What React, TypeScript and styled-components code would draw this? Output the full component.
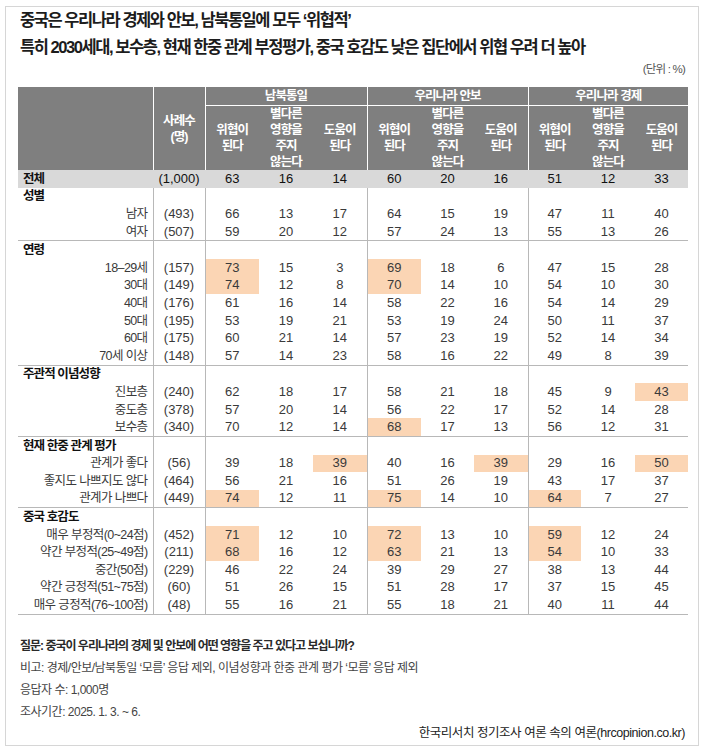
import React from "react";
import styled, { createGlobalStyle, css } from "styled-components";

const GlobalStyle = createGlobalStyle`
  html, body { margin: 0; padding: 0; background: #fff; }
  body {
    font-family: "Liberation Sans", "Noto Sans CJK KR", sans-serif;
    color: #333;
  }
`;

const LINE = "#b8b8b8";
const HEAD_BG = "#7f7f7f";
const TOTAL_BG = "#d9d9d9";
const HL = "#fbd5b4";

const Frame = styled.div`
  box-sizing: border-box;
  margin: 6px 0 0 5px;
  width: 694px;
  height: 740px;
  border: 1px solid #d6d6d6;
  display: flex;
  flex-direction: column;
`;

const TitleBlock = styled.header`
  padding: 0 13px 0 14px;
`;

const Title = styled.h1`
  margin: 0;
  font-size: 16.5px;
  font-weight: 700;
  line-height: 27px;
  letter-spacing: -1.45px;
  color: #1c1c1c;
`;

const Unit = styled.div`
  text-align: right;
  font-size: 11.5px;
  line-height: 14px;
  letter-spacing: -0.8px;
  color: #555;
  margin-top: 1px;
`;

const Table = styled.table`
  margin: 11px 0 0 12px;
  width: 670px;
  border-collapse: collapse;
  table-layout: fixed;
`;

const Th = styled.th<{ $right?: boolean; $bottom?: boolean; $h?: number }>`
  background: ${HEAD_BG};
  color: #fff;
  font-weight: 700;
  font-size: 12.5px;
  line-height: 16px;
  letter-spacing: -0.9px;
  padding: 0;
  text-align: center;
  vertical-align: middle;
  height: ${(p) => p.$h ?? 16}px;
  border-right: ${(p) => (p.$right ? "1px solid #fff" : "0")};
  border-bottom: ${(p) => (p.$bottom ? "1px solid #fff" : "0")};
`;

const Tr = styled.tr<{ $total?: boolean; $end?: boolean }>`
  height: 17.6px;
  background: ${(p) => (p.$total ? TOTAL_BG : "transparent")};
  ${(p) =>
    p.$end &&
    css`
      border-bottom: 1px solid ${LINE};
    `}
`;

const LabelCell = styled.td<{ $group?: boolean; $total?: boolean }>`
  padding: 0 5px;
  height: 17.6px;
  font-size: 12.5px;
  line-height: 16px;
  letter-spacing: ${(p) => (p.$group || p.$total ? "-0.9px" : "-0.6px")};
  white-space: nowrap;
  text-align: ${(p) => (p.$group || p.$total ? "left" : "right")};
  font-weight: ${(p) => (p.$group || p.$total ? 700 : 400)};
  color: ${(p) => (p.$group || p.$total ? "#111" : "#3a3a3a")};
  border-right: 1px solid ${(p) => (p.$total ? TOTAL_BG : LINE)};
`;

const CountCell = styled.td<{ $total?: boolean }>`
  padding: 0;
  font-size: 13px;
  line-height: 16px;
  text-align: center;
  color: ${(p) => (p.$total ? "#111" : "#3a3a3a")};
  border-right: 1px solid ${(p) => (p.$total ? TOTAL_BG : LINE)};
`;

const ValueCell = styled.td<{ $hl?: boolean; $sep?: boolean; $total?: boolean }>`
  padding: 0;
  font-size: 13px;
  line-height: 16px;
  text-align: center;
  color: ${(p) => (p.$total ? "#111" : "#3a3a3a")};
  background: ${(p) => (p.$hl ? HL : "transparent")};
  border-right: ${(p) =>
    p.$sep ? `1px solid ${p.$total ? TOTAL_BG : LINE}` : "0"};
`;

const Notes = styled.footer`
  margin-top: 20px;
  padding: 0 13px 0 14px;
  display: flex;
  flex-direction: column;
`;

const Note = styled.p<{ $strong?: boolean }>`
  margin: 0;
  font-size: 12px;
  line-height: 22px;
  letter-spacing: ${(p) => (p.$strong ? "-1px" : "-0.5px")};
  color: ${(p) => (p.$strong ? "#2a2a2a" : "#444")};
  font-weight: ${(p) => (p.$strong ? 700 : 400)};
`;

const Source = styled.p`
  margin: 0;
  text-align: right;
  font-size: 12.5px;
  line-height: 21px;
  letter-spacing: -0.45px;
  color: #222;
`;

type Row = { label: string; n: string; v: number[]; hl?: number[] };
type Section = { title: string; rows: Row[] };

const total: Row = { label: "전체", n: "(1,000)", v: [63, 16, 14, 60, 20, 16, 51, 12, 33] };

const sections: Section[] = [
  {
    title: "성별",
    rows: [
      { label: "남자", n: "(493)", v: [66, 13, 17, 64, 15, 19, 47, 11, 40] },
      { label: "여자", n: "(507)", v: [59, 20, 12, 57, 24, 13, 55, 13, 26] },
    ],
  },
  {
    title: "연령",
    rows: [
      { label: "18–29세", n: "(157)", v: [73, 15, 3, 69, 18, 6, 47, 15, 28], hl: [0, 3] },
      { label: "30대", n: "(149)", v: [74, 12, 8, 70, 14, 10, 54, 10, 30], hl: [0, 3] },
      { label: "40대", n: "(176)", v: [61, 16, 14, 58, 22, 16, 54, 14, 29] },
      { label: "50대", n: "(195)", v: [53, 19, 21, 53, 19, 24, 50, 11, 37] },
      { label: "60대", n: "(175)", v: [60, 21, 14, 57, 23, 19, 52, 14, 34] },
      { label: "70세 이상", n: "(148)", v: [57, 14, 23, 58, 16, 22, 49, 8, 39] },
    ],
  },
  {
    title: "주관적 이념성향",
    rows: [
      { label: "진보층", n: "(240)", v: [62, 18, 17, 58, 21, 18, 45, 9, 43], hl: [8] },
      { label: "중도층", n: "(378)", v: [57, 20, 14, 56, 22, 17, 52, 14, 28] },
      { label: "보수층", n: "(340)", v: [70, 12, 14, 68, 17, 13, 56, 12, 31], hl: [3] },
    ],
  },
  {
    title: "현재 한중 관계 평가",
    rows: [
      { label: "관계가 좋다", n: "(56)", v: [39, 18, 39, 40, 16, 39, 29, 16, 50], hl: [2, 5, 8] },
      { label: "좋지도 나쁘지도 않다", n: "(464)", v: [56, 21, 16, 51, 26, 19, 43, 17, 37] },
      { label: "관계가 나쁘다", n: "(449)", v: [74, 12, 11, 75, 14, 10, 64, 7, 27], hl: [0, 3, 6] },
    ],
  },
  {
    title: "중국 호감도",
    rows: [
      { label: "매우 부정적(0~24점)", n: "(452)", v: [71, 12, 10, 72, 13, 10, 59, 12, 24], hl: [0, 3, 6] },
      { label: "약간 부정적(25~49점)", n: "(211)", v: [68, 16, 12, 63, 21, 13, 54, 10, 33], hl: [0, 3, 6] },
      { label: "중간(50점)", n: "(229)", v: [46, 22, 24, 39, 29, 27, 38, 13, 44] },
      { label: "약간 긍정적(51~75점)", n: "(60)", v: [51, 26, 15, 51, 28, 17, 37, 15, 45] },
      { label: "매우 긍정적(76~100점)", n: "(48)", v: [55, 16, 21, 55, 18, 21, 40, 11, 44] },
    ],
  },
];

const groups = ["남북통일", "우리나라 안보", "우리나라 경제"];
const colWidths = [135, 52, 54, 54, 54, 54, 53, 54, 53, 54, 53];

const SubHead = ({ last }: { last: boolean }) => (
  <>
    <Th>
      위협이
      <br />
      된다
    </Th>
    <Th>
      별다른
      <br />
      영향을
      <br />
      주지
      <br />
      않는다
    </Th>
    <Th $right={!last}>
      도움이
      <br />
      된다
    </Th>
  </>
);

const Values = ({ row, isTotal }: { row: Row; isTotal?: boolean }) => (
  <>
    {row.v.map((val, i) => (
      <ValueCell
        key={i}
        $total={isTotal}
        $hl={row.hl?.includes(i)}
        $sep={i === 2 || i === 5}
      >
        {val}
      </ValueCell>
    ))}
  </>
);

export default function App() {
  return (
    <>
      <GlobalStyle />
      <Frame>
        <TitleBlock>
          <Title>
            중국은 우리나라 경제와 안보, 남북통일에 모두 ‘위협적’
            <br />
            특히 2030세대, 보수층, 현재 한중 관계 부정평가, 중국 호감도 낮은 집단에서 위협 우려 더 높아
          </Title>
          <Unit>(단위 : %)</Unit>
        </TitleBlock>

        <Table>
          <colgroup>
            {colWidths.map((w, i) => (
              <col key={i} style={{ width: w }} />
            ))}
          </colgroup>
          <thead>
            <tr>
              <Th rowSpan={2} $right />
              <Th rowSpan={2} $right>
                사례수
                <br />
                (명)
              </Th>
              {groups.map((g, i) => (
                <Th key={g} colSpan={3} $h={18} $bottom $right={i < 2}>
                  {g}
                </Th>
              ))}
            </tr>
            <tr>
              {groups.map((g, i) => (
                <SubHead key={g} last={i === 2} />
              ))}
            </tr>
          </thead>
          <tbody>
            <Tr $total>
              <LabelCell $total>{total.label}</LabelCell>
              <CountCell $total>{total.n}</CountCell>
              <Values row={total} isTotal />
            </Tr>
            {sections.map((s) => (
              <React.Fragment key={s.title}>
                <Tr>
                  <LabelCell $group>{s.title}</LabelCell>
                  <CountCell />
                  <ValueCell />
                  <ValueCell />
                  <ValueCell $sep />
                  <ValueCell />
                  <ValueCell />
                  <ValueCell $sep />
                  <ValueCell />
                  <ValueCell />
                  <ValueCell />
                </Tr>
                {s.rows.map((r, idx) => (
                  <Tr key={r.label} $end={idx === s.rows.length - 1}>
                    <LabelCell>{r.label}</LabelCell>
                    <CountCell>{r.n}</CountCell>
                    <Values row={r} />
                  </Tr>
                ))}
              </React.Fragment>
            ))}
          </tbody>
        </Table>

        <Notes>
          <Note $strong>질문: 중국이 우리나라의 경제 및 안보에 어떤 영향을 주고 있다고 보십니까?</Note>
          <Note>비고: 경제/안보/남북통일 ‘모름’ 응답 제외, 이념성향과 한중 관계 평가 ‘모름’ 응답 제외</Note>
          <Note>응답자 수: 1,000명</Note>
          <Note>조사기간: 2025. 1. 3. ~ 6.</Note>
          <Source>한국리서치 정기조사 여론 속의 여론(hrcopinion.co.kr)</Source>
        </Notes>
      </Frame>
    </>
  );
}
